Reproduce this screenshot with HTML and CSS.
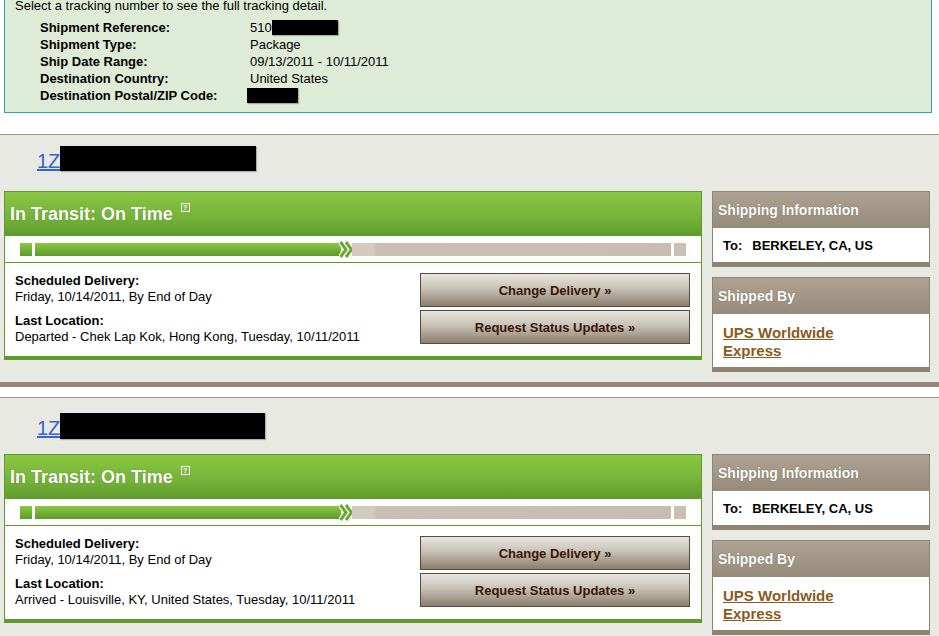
FILE: index.html
```html
<!DOCTYPE html>
<html>
<head>
<meta charset="utf-8">
<link rel="stylesheet" href="styles.css">
</head>
<body>
<div class="summary">
  <div class="intro">Select a tracking number to see the full tracking detail.</div>
  <div class="facts">
    <div class="fact"><span class="lbl">Shipment Reference:</span><span class="val">510<span class="redact r-ref"></span></span></div>
    <div class="fact"><span class="lbl">Shipment Type:</span><span class="val">Package</span></div>
    <div class="fact"><span class="lbl">Ship Date Range:</span><span class="val">09/13/2011 - 10/11/2011</span></div>
    <div class="fact"><span class="lbl">Destination Country:</span><span class="val">United States</span></div>
    <div class="fact"><span class="lbl">Destination Postal/ZIP Code:</span><span class="val val-zip"><span class="redact r-zip"></span></span></div>
  </div>
</div>

<div class="section">
  <div class="trk"><a class="trk-link" href="#">1Z</a><span class="redact r-trk1"></span></div>
  <div class="row">
    <div class="status">
      <div class="status-head"><span class="status-title">In Transit: On Time</span><span class="help">?</span></div>
      <div class="progress">
        <span class="sq sq-green"></span>
        <span class="bar bar-green"></span>
        <svg class="chev" width="14" height="21" viewBox="0 0 14 21">
          <polyline points="1.5,3 7,10.5 1.5,18" fill="none" stroke="#fff" stroke-width="5.5"/>
          <polyline points="7,3 12.5,10.5 7,18" fill="none" stroke="#fff" stroke-width="5.5"/>
          <polyline points="1.5,3 7,10.5 1.5,18" fill="none" stroke="#6aa832" stroke-width="3"/>
          <polyline points="7,3 12.5,10.5 7,18" fill="none" stroke="#6aa832" stroke-width="3"/>
        </svg>
        <span class="bar bar-gray"></span>
        <span class="sq sq-gray"></span>
      </div>
      <div class="status-body">
        <div class="details">
          <div class="detail">
            <div class="d-lbl">Scheduled Delivery:</div>
            <div>Friday, 10/14/2011, By End of Day</div>
          </div>
          <div class="detail">
            <div class="d-lbl">Last Location:</div>
            <div>Departed - Chek Lap Kok, Hong Kong, Tuesday, 10/11/2011</div>
          </div>
        </div>
        <div class="buttons">
          <button class="btn">Change Delivery »</button>
          <button class="btn">Request Status Updates »</button>
        </div>
      </div>
    </div>
    <div class="side">
      <div class="card">
        <div class="card-head">Shipping Information</div>
        <div class="card-body card-to"><span class="to">To:</span>BERKELEY, CA, US</div>
      </div>
      <div class="card">
        <div class="card-head">Shipped By</div>
        <div class="card-body card-svc"><a href="#" class="svc">UPS Worldwide<br>Express</a></div>
      </div>
    </div>
  </div>
</div>

<div class="section">
  <div class="trk trk2"><a class="trk-link" href="#">1Z</a><span class="redact r-trk2"></span></div>
  <div class="row">
    <div class="status">
      <div class="status-head"><span class="status-title">In Transit: On Time</span><span class="help">?</span></div>
      <div class="progress">
        <span class="sq sq-green"></span>
        <span class="bar bar-green"></span>
        <svg class="chev" width="14" height="21" viewBox="0 0 14 21">
          <polyline points="1.5,3 7,10.5 1.5,18" fill="none" stroke="#fff" stroke-width="5.5"/>
          <polyline points="7,3 12.5,10.5 7,18" fill="none" stroke="#fff" stroke-width="5.5"/>
          <polyline points="1.5,3 7,10.5 1.5,18" fill="none" stroke="#6aa832" stroke-width="3"/>
          <polyline points="7,3 12.5,10.5 7,18" fill="none" stroke="#6aa832" stroke-width="3"/>
        </svg>
        <span class="bar bar-gray"></span>
        <span class="sq sq-gray"></span>
      </div>
      <div class="status-body">
        <div class="details">
          <div class="detail">
            <div class="d-lbl">Scheduled Delivery:</div>
            <div>Friday, 10/14/2011, By End of Day</div>
          </div>
          <div class="detail">
            <div class="d-lbl">Last Location:</div>
            <div>Arrived - Louisville, KY, United States, Tuesday, 10/11/2011</div>
          </div>
        </div>
        <div class="buttons">
          <button class="btn">Change Delivery »</button>
          <button class="btn">Request Status Updates »</button>
        </div>
      </div>
    </div>
    <div class="side">
      <div class="card">
        <div class="card-head">Shipping Information</div>
        <div class="card-body card-to"><span class="to">To:</span>BERKELEY, CA, US</div>
      </div>
      <div class="card">
        <div class="card-head">Shipped By</div>
        <div class="card-body card-svc"><a href="#" class="svc">UPS Worldwide<br>Express</a></div>
      </div>
    </div>
  </div>
</div>
</body>
</html>
```
FILE: styles.css
```css
* { box-sizing: border-box; }
html, body { margin: 0; padding: 0; background: #fff; }
body {
  font-family: "Liberation Sans", Arial, sans-serif;
  font-size: 13px;
  color: #000;
  overflow: hidden;
}

/* summary box */
.summary {
  margin: -4px 0 21px 4px;
  width: 928px;
  background: #deebd6;
  border: 1px solid #2aa8ae;
  padding: 0 0 8px 0;
}
.intro { padding-left: 10px; line-height: 17px; }
.facts { margin-top: 5px; padding-left: 35px; }
.fact { display: flex; line-height: 17px; }
.lbl { width: 210px; font-weight: bold; }
.val { display: flex; align-items: center; }
.val-zip { margin-left: -3px; }
.redact { display: inline-block; background: #000; box-shadow: 1px 1px 1px rgba(0,0,0,0.25); }
.r-ref { width: 66px; height: 15px; }
.r-zip { width: 51px; height: 15px; }

/* tracking sections */
.section {
  background: #e9e9e3;
  border-top: 1px solid #a2978a;
  border-bottom: 5px solid #958a7a;
  margin-bottom: 10px;
  padding: 0 0 10px 4px;
}
.trk {
  height: 56px;
  padding: 11px 0 0 33px;
  display: flex;
  align-items: flex-start;
}
.trk2 { padding-top: 15px; }
.trk-link {
  font-size: 20px;
  line-height: 22px;
  margin-top: 4px;
  color: #3762d4;
  text-decoration: underline;
}
.r-trk1 { width: 196px; height: 25px; }
.r-trk2 { width: 205px; height: 26px; }

.row { display: flex; align-items: flex-start; gap: 10px; }

.status {
  width: 698px;
  background: #fff;
  border: 1px solid #5e9a2c;
  border-bottom: 4px solid #5f9a2d;
}
.status-head {
  height: 44px;
  background: linear-gradient(#89c641, #76b43a 55%, #5f9b2d);
  display: flex;
  align-items: center;
  padding-left: 5px;
}
.status-title {
  color: #fff;
  font-weight: bold;
  font-size: 18px;
  text-shadow: 0 0 1px rgba(40,70,10,0.6);
}
.help {
  align-self: flex-start;
  margin: 11px 0 0 8px;
  width: 9px;
  height: 9px;
  border: 1px solid #fff;
  color: #fff;
  font-size: 7px;
  line-height: 7px;
  font-weight: bold;
  text-align: center;
}

.progress {
  height: 27px;
  border-bottom: 1px solid #5e9a2c;
  display: flex;
  align-items: flex-start;
  padding: 7px 15px 0 15px;
}
.sq, .bar { display: block; height: 13px; }
.sq { width: 12px; }
.sq-green, .bar-green { background: linear-gradient(#8cc742, #5d9a2b); }
.sq-green { margin-right: 3px; }
.bar-green { width: 306px; }
.chev { display: block; margin: -4px -1px 0 -2px; flex: none; }
.bar-gray {
  flex: 1;
  background: linear-gradient(90deg, #d2cbc0 0, #d2cbc0 22px, #c9c0b3 24px, #c7beb1);
}
.sq-gray { background: #c9c0b3; margin-left: 3px; }

.status-body {
  height: 93px;
  display: flex;
  justify-content: space-between;
  padding: 10px 11px 0 10px;
}
.detail { line-height: 16px; }
.detail + .detail { margin-top: 8px; }
.d-lbl { font-weight: bold; }
.buttons { display: flex; flex-direction: column; gap: 3px; }
.btn {
  width: 270px;
  height: 34px;
  border: 1px solid #5b4a37;
  background: linear-gradient(#e8e6e1, #c8c1b6 45%, #8a7f6f);
  font-family: "Liberation Sans", Arial, sans-serif;
  font-size: 13px;
  font-weight: bold;
  color: #3a1507;
  padding: 0;
  text-align: center;
}

.side { width: 218px; }
.card {
  border: 1px solid #8f8474;
  border-bottom: 5px solid #8f8474;
}
.card + .card { margin-top: 10px; }
.card-head {
  height: 36px;
  background: linear-gradient(#aea393, #968b7a);
  color: #fff;
  font-weight: bold;
  font-size: 14px;
  display: flex;
  align-items: center;
  padding-left: 5px;
  text-shadow: 0 0 1px rgba(60,50,40,0.6);
}
.card-body { background: #fff; padding-left: 10px; }
.card-to {
  height: 34px;
  display: flex;
  align-items: center;
  font-weight: bold;
  font-size: 13px;
}
.to { margin-right: 10px; }
.card-svc { height: 53px; padding-top: 10px; }
.svc {
  color: #8b5a1c;
  font-weight: bold;
  font-size: 15px;
  line-height: 18px;
  text-decoration: underline;
}
```
